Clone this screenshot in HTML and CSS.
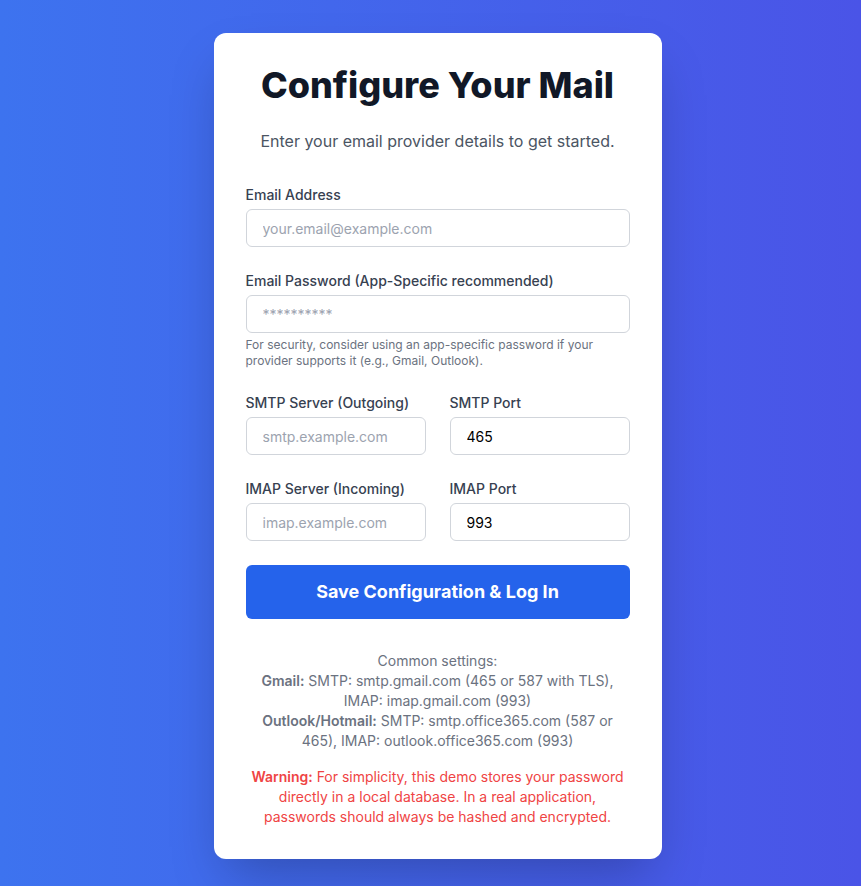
FILE: index.html
```html
<!DOCTYPE html>
<html lang="en">
<head>
<meta charset="utf-8">
<title>Configure Your Mail</title>
<link rel="stylesheet" href="styles.css">
</head>
<body>
<main class="page">
  <section class="card">
    <h1 class="title">Configure Your Mail</h1>
    <p class="subtitle">Enter your email provider details to get started.</p>
    <form class="form">
      <div class="field">
        <label class="label" for="email">Email Address</label>
        <input class="input" id="email" type="email" placeholder="your.email@example.com">
      </div>
      <div class="field">
        <label class="label" for="password">Email Password (App-Specific recommended)</label>
        <input class="input" id="password" type="password" placeholder="**********">
        <p class="hint">For security, consider using an app-specific password if your provider supports it (e.g., Gmail, Outlook).</p>
      </div>
      <div class="row">
        <div class="field">
          <label class="label" for="smtp">SMTP Server (Outgoing)</label>
          <input class="input" id="smtp" type="text" placeholder="smtp.example.com">
        </div>
        <div class="field">
          <label class="label" for="smtpport">SMTP Port</label>
          <input class="input" id="smtpport" type="text" value="465">
        </div>
      </div>
      <div class="row">
        <div class="field">
          <label class="label" for="imap">IMAP Server (Incoming)</label>
          <input class="input" id="imap" type="text" placeholder="imap.example.com">
        </div>
        <div class="field">
          <label class="label" for="imapport">IMAP Port</label>
          <input class="input" id="imapport" type="text" value="993">
        </div>
      </div>
      <button class="button" type="button">Save Configuration &amp; Log In</button>
    </form>
    <div class="info">
      <p>Common settings:<br>
      <strong>Gmail:</strong> SMTP: smtp.gmail.com (465 or 587 with TLS), IMAP: imap.gmail.com (993)<br>
      <strong>Outlook/Hotmail:</strong> SMTP: smtp.office365.com (587 or 465), IMAP: outlook.office365.com (993)</p>
      <p class="warning"><strong>Warning:</strong> For simplicity, this demo stores your password directly in a local database. In a real application, passwords should always be hashed and encrypted.</p>
    </div>
  </section>
</main>
</body>
</html>
```
FILE: styles.css
```css
* { box-sizing: border-box; }
html, body { margin: 0; padding: 0; }
body {
  font-family: Inter, "Noto Sans", sans-serif;
  background: linear-gradient(to right, #3d73ef, #4a54e7);
  height: 886px;
  overflow: hidden;
}
.page {
  height: 886px;
  display: flex;
  align-items: flex-start;
  justify-content: center;
  padding: 33px 0 0 14px;
}
.card {
  width: 448px;
  background: #fff;
  border-radius: 12px;
  padding: 32px;
  box-shadow: 0 25px 50px -12px rgba(0,0,0,0.25);
}
.title {
  margin: 0 0 24px;
  font-size: 36px;
  line-height: 40px;
  font-weight: 800;
  color: #111827;
  text-align: center;
}
.subtitle {
  margin: 0 0 32px;
  font-size: 16px;
  line-height: 24px;
  color: #4b5563;
  text-align: center;
}
.form {
  display: flex;
  flex-direction: column;
  gap: 24px;
}
.field {
  display: flex;
  flex-direction: column;
  min-width: 0;
}
.label {
  font-size: 14px;
  line-height: 20px;
  font-weight: 500;
  color: #374151;
  margin-bottom: 4px;
}
.input {
  font-family: inherit;
  font-size: 14px;
  line-height: 20px;
  height: 38px;
  padding: 8px 16px;
  border: 1px solid #d1d5db;
  border-radius: 6px;
  color: #000;
  background: #fff;
  width: 100%;
  outline: none;
}
.input::placeholder { color: #9ca3af; }
.hint {
  margin: 4px 0 0;
  font-size: 12px;
  line-height: 16px;
  color: #6b7280;
}
.row {
  display: grid;
  grid-template-columns: 1fr 1fr;
  gap: 24px;
}
.button {
  font-family: inherit;
  font-size: 18px;
  line-height: 28px;
  font-weight: 700;
  color: #fff;
  background: #2563eb;
  border: none;
  border-radius: 6px;
  padding: 13px 16px;
  width: 100%;
  cursor: pointer;
}
.info {
  margin-top: 32px;
  text-align: center;
  font-size: 14px;
  line-height: 20px;
  color: #6b7280;
}
.info p { margin: 0; }
.info strong { font-weight: 600; }
.warning {
  margin-top: 16px !important;
  color: #ef4444;
}
```
